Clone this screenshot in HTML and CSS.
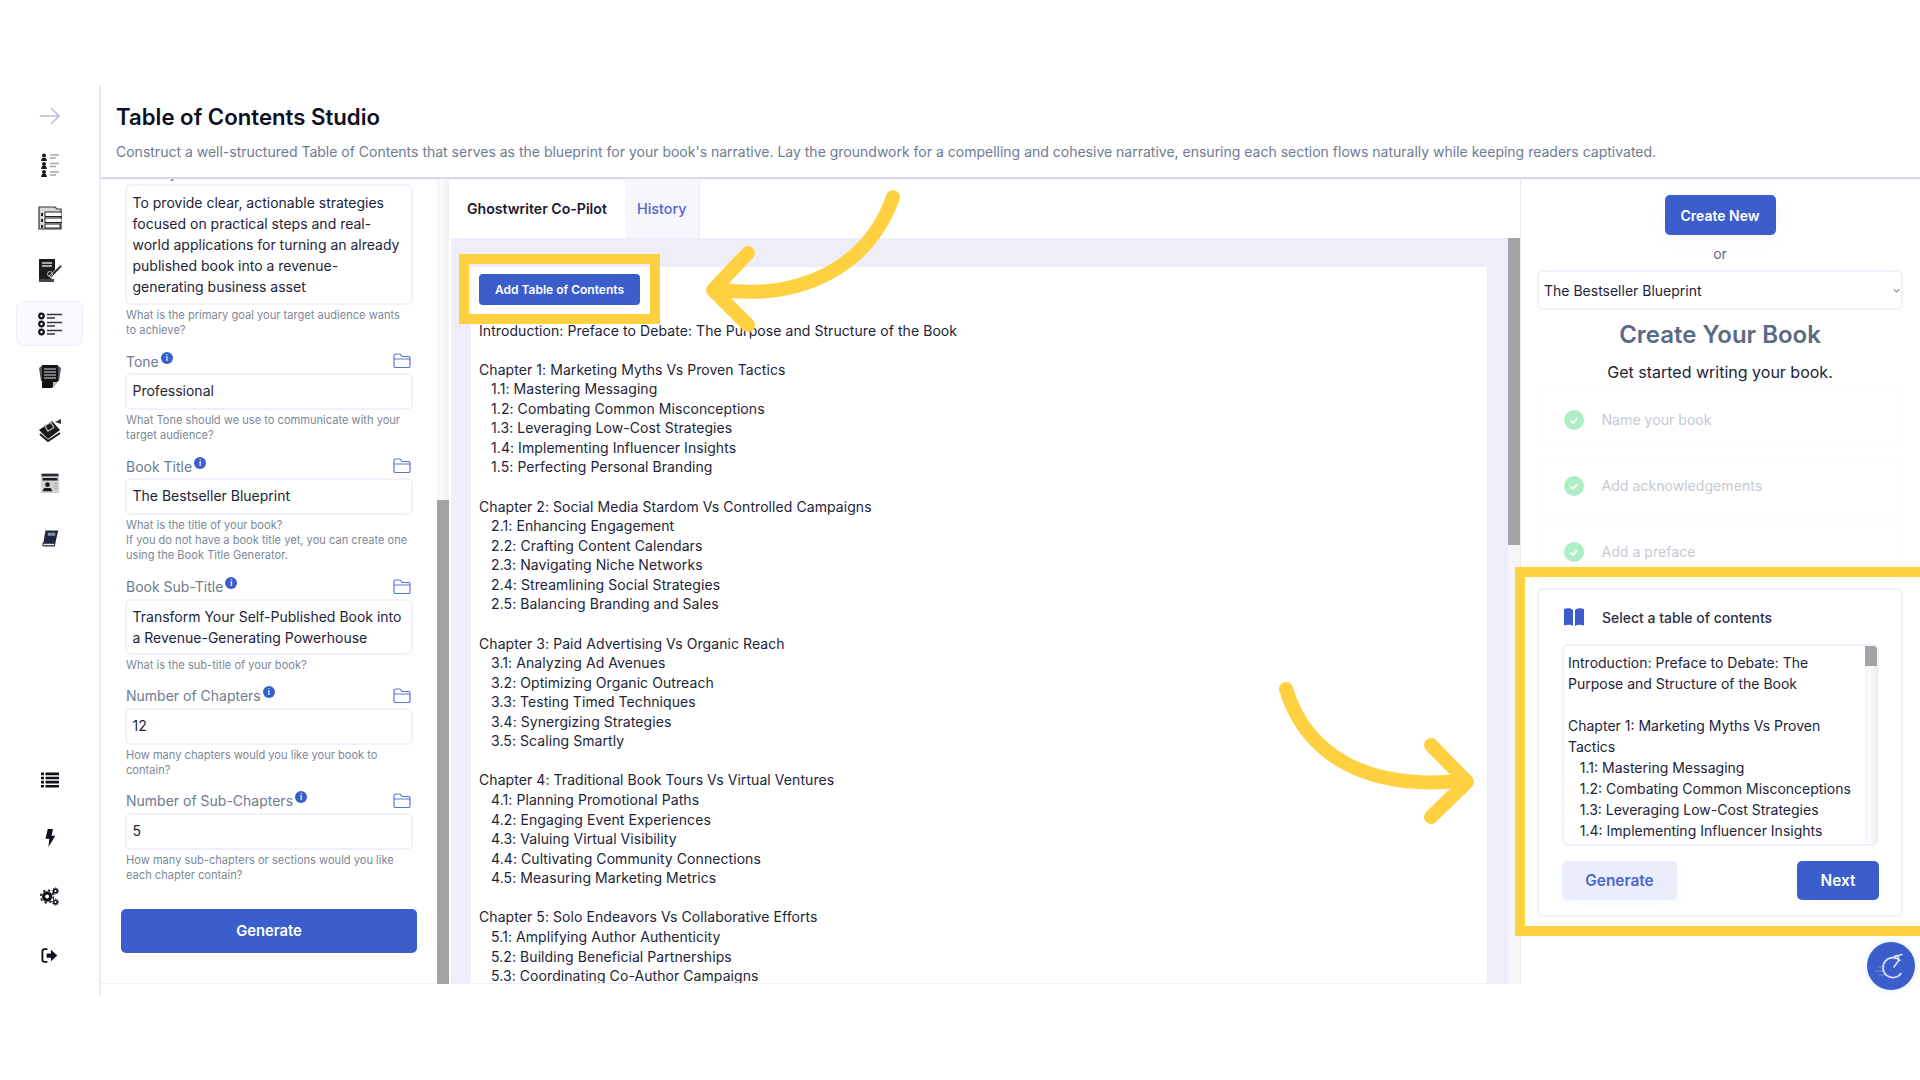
FILE: index.html
```html
<!DOCTYPE html>
<html lang="en">
<head>
<meta charset="utf-8">
<title>Table of Contents Studio</title>
<link rel="stylesheet" href="styles.css">
</head>
<body>
<div class="app">
  <nav class="side">
    <div class="nav-top">
      <div class="nav-item nav-arrow"><svg viewBox="0 0 24 24" width="24" height="24" fill="none" stroke="#b9bcd6" stroke-width="1.5"><path d="M2 12h19M13 4l8 8-8 8"/></svg></div>
      <div class="nav-item"><svg viewBox="0 0 24 26" width="24" height="26"><g fill="#16161e"><circle cx="6" cy="3.500" r="2"/><path d="M3 9l1-3h4l1 3z"/><circle cx="6" cy="12" r="2"/><path d="M3 17l1-3h4l1 3z"/><circle cx="6" cy="20" r="2"/><path d="M3 25l1-3h4l1 3z"/></g><g stroke="#a9a9ad" stroke-width="1.400"><path d="M12 3h9M12 6h6M12 11.500h9M12 14.500h6M12 20h9M12 23h6"/></g></svg></div>
      <div class="nav-item"><svg viewBox="0 0 24 24" width="24" height="24"><path d="M1 1h16l2 2h4v20H1z" fill="#d9d9db" stroke="#333" stroke-width="1.200"/><g fill="#fff" stroke="#222" stroke-width="1"><rect x="7" y="6" width="17" height="4.500"/><rect x="7" y="12" width="17" height="4.500"/><rect x="7" y="18" width="15" height="4"/></g><g fill="#222"><rect x="3" y="7" width="2" height="3"/><rect x="3" y="13" width="2" height="3"/><rect x="3" y="19" width="2" height="3"/></g></svg></div>
      <div class="nav-item"><svg viewBox="0 0 24 24" width="24" height="24"><path d="M1 0h16v13l-4 7H1z" fill="#1d1d22"/><rect x="1" y="20" width="15" height="3" fill="#44444a"/><path d="M4 3h10v2H4zM4 6h10v2H4z" fill="#a9a9ad"/><path d="M11 17L22.500 6 24 7.500 13 19z" fill="#1d1d22" stroke="#fff" stroke-width=".7"/><circle cx="12" cy="15" r="2.500" fill="none" stroke="#bbb"/></svg></div>
      <div class="nav-item nav-active"><svg viewBox="0 0 24 24" width="24" height="24"><g fill="none" stroke="#0e0e14" stroke-width="2.200"><circle cx="3.500" cy="4" r="2.300"/><circle cx="3.500" cy="12" r="2.300"/><circle cx="3.500" cy="20" r="2.300"/></g><g stroke="#33333a" stroke-width="1.500"><path d="M9 2.500h15M9 6h8M9 10.500h15M9 14h8M9 18.500h15M9 22h8"/></g></svg></div>
      <div class="nav-item"><svg viewBox="0 0 24 25" width="24" height="25"><path d="M1 4l4-3h14l4 3-2 13-1 0V4H4v13H3z" fill="#555"/><path d="M4 1h16v16l-6 7H4z" fill="#141418"/><g stroke="#9b9b9f" stroke-width="1.500"><path d="M6 5h12M6 8h12M6 11h12M6 14h12"/></g><path d="M15 24l5-6h-5z" fill="#bbb"/></svg></div>
      <div class="nav-item"><svg viewBox="0 0 24 24" width="24" height="24"><path d="M1 12L14 3l8 9-12 9z" fill="#1a1a1f"/><path d="M2 16l8 7 12-8" fill="none" stroke="#1a1a1f" stroke-width="2"/><rect x="8" y="6" width="7" height="6" fill="none" stroke="#bbb" stroke-width="1.200" transform="rotate(-30 11 9)"/><path d="M17 4l6-3v5z" fill="#333"/></svg></div>
      <div class="nav-item"><svg viewBox="0 0 24 24" width="20" height="24"><rect x="1" y="0" width="22" height="24" rx="1" fill="#d3d3d6"/><rect x="2" y="1" width="20" height="3" fill="#2a2a30"/><rect x="3" y="6" width="18" height="3" fill="#1d1d22"/><circle cx="9" cy="14" r="2.800" fill="#1a1a1f"/><path d="M3 22l2-4h8l2 4z" fill="#1a1a1f"/><g stroke="#9a9a9e" stroke-width="1"><path d="M17 13h4M17 16h4M17 19h4"/></g></svg></div>
      <div class="nav-item nav-book"><svg viewBox="0 0 24 24" width="18" height="18"><path d="M6 2h17l-4 17H3z" fill="#1f2440"/><path d="M3 19h15.500l-.8 3.500H4.500a2 2 0 0 1-1.500-3.500z" fill="#e9e9ee" stroke="#1f2440" stroke-width="1.400"/><rect x="9" y="5" width="10" height="4" fill="#8b90a8"/></svg></div>
    </div>
    <div class="nav-bottom">
      <div class="nav-item"><svg viewBox="0 0 24 24" width="18" height="18"><path fill="#10101a" d="M0 2h4v3.500H0zM6 2h18v3.500H6zM0 7.500h4V11H0zM6 7.500h18V11H6zM0 13h4v3.500H0zM6 13h18v3.500H6zM0 18.500h4V22H0zM6 18.500h18V22H6z"/></svg></div>
      <div class="nav-item"><svg viewBox="0 0 24 24" width="18" height="18"><path fill="#10101a" d="M9 0h7l-2 9h5L10 24l1-11H6z"/></svg></div>
      <div class="nav-item"><svg viewBox="0 0 24 24" width="19" height="19"><g fill="none" stroke="#10101a"><circle cx="9" cy="12" r="4.500" stroke-width="4"/><circle cx="9" cy="12" r="8" stroke-width="2" stroke-dasharray="3 3.300"/><circle cx="19.500" cy="5" r="2.300" stroke-width="2"/><circle cx="19.500" cy="5" r="4" stroke-width="1.200" stroke-dasharray="1.500 1.500"/><circle cx="19.500" cy="19" r="2.300" stroke-width="2"/><circle cx="19.500" cy="19" r="4" stroke-width="1.200" stroke-dasharray="1.500 1.500"/></g></svg></div>
      <div class="nav-item"><svg viewBox="0 0 24 24" width="17" height="17"><path d="M9 3H5a3 3 0 0 0-3 3v12a3 3 0 0 0 3 3h4" fill="none" stroke="#10101a" stroke-width="2.600"/><path fill="#10101a" d="M8 9h6V4l9 8-9 8v-5H8z"/></svg></div>
    </div>
  </nav>
  <div class="work">
    <header class="head">
      <h1 class="title">Table of Contents Studio</h1>
      <p class="sub">Construct a well-structured Table of Contents that serves as the blueprint for your book's narrative. Lay the groundwork for a compelling and cohesive narrative, ensuring each section flows naturally while keeping readers captivated.</p>
    </header>
    <div class="panels">
      <div class="split">
        <section class="form-wrap">
          <div class="form">
            <div class="field">
              <div class="label-row"><span class="label">Primary Goal</span><svg class="folder" viewBox="0 0 18 15"><use href="#folder"/></svg></div>
              <div class="input input-tall">To provide clear, actionable strategies focused on practical steps and real-world applications for turning an already published book into a revenue-generating business asset</div>
              <p class="help">What is the primary goal your target audience wants to achieve?</p>
            </div>
            <div class="field">
              <div class="label-row"><span class="label">Tone<i class="info">i</i></span><svg class="folder" viewBox="0 0 18 15"><use href="#folder"/></svg></div>
              <div class="input">Professional</div>
              <p class="help">What Tone should we use to communicate with your target audience?</p>
            </div>
            <div class="field">
              <div class="label-row"><span class="label">Book Title<i class="info">i</i></span><svg class="folder" viewBox="0 0 18 15"><use href="#folder"/></svg></div>
              <div class="input">The Bestseller Blueprint</div>
              <p class="help">What is the title of your book?<br>If you do not have a book title yet, you can create one using the Book Title Generator.</p>
            </div>
            <div class="field">
              <div class="label-row"><span class="label">Book Sub-Title<i class="info">i</i></span><svg class="folder" viewBox="0 0 18 15"><use href="#folder"/></svg></div>
              <div class="input input-double">Transform Your Self-Published Book into a Revenue-Generating Powerhouse</div>
              <p class="help">What is the sub-title of your book?</p>
            </div>
            <div class="field">
              <div class="label-row"><span class="label">Number of Chapters<i class="info">i</i></span><svg class="folder" viewBox="0 0 18 15"><use href="#folder"/></svg></div>
              <div class="input">12</div>
              <p class="help">How many chapters would you like your book to contain?</p>
            </div>
            <div class="field">
              <div class="label-row"><span class="label">Number of Sub-Chapters<i class="info">i</i></span><svg class="folder" viewBox="0 0 18 15"><use href="#folder"/></svg></div>
              <div class="input">5</div>
              <p class="help">How many sub-chapters or sections would you like each chapter contain?</p>
            </div>
            <button class="btn btn-generate">Generate</button>
          </div>
        </section>
        <div class="scroll scroll-left"><div class="thumb thumb-left"></div></div>
        <section class="main">
          <div class="tabs">
            <div class="tab tab-on">Ghostwriter Co-Pilot</div>
            <div class="tab tab-off">History</div>
          </div>
          <div class="doc-wrap">
            <div class="doc">
              <button class="btn btn-add">Add Table of Contents</button>
<pre class="toc">Introduction: Preface to Debate: The Purpose and Structure of the Book

Chapter 1: Marketing Myths Vs Proven Tactics
   1.1: Mastering Messaging
   1.2: Combating Common Misconceptions
   1.3: Leveraging Low-Cost Strategies
   1.4: Implementing Influencer Insights
   1.5: Perfecting Personal Branding

Chapter 2: Social Media Stardom Vs Controlled Campaigns
   2.1: Enhancing Engagement
   2.2: Crafting Content Calendars
   2.3: Navigating Niche Networks
   2.4: Streamlining Social Strategies
   2.5: Balancing Branding and Sales

Chapter 3: Paid Advertising Vs Organic Reach
   3.1: Analyzing Ad Avenues
   3.2: Optimizing Organic Outreach
   3.3: Testing Timed Techniques
   3.4: Synergizing Strategies
   3.5: Scaling Smartly

Chapter 4: Traditional Book Tours Vs Virtual Ventures
   4.1: Planning Promotional Paths
   4.2: Engaging Event Experiences
   4.3: Valuing Virtual Visibility
   4.4: Cultivating Community Connections
   4.5: Measuring Marketing Metrics

Chapter 5: Solo Endeavors Vs Collaborative Efforts
   5.1: Amplifying Author Authenticity
   5.2: Building Beneficial Partnerships
   5.3: Coordinating Co-Author Campaigns</pre>
            </div>
            <div class="scroll scroll-main"><div class="thumb thumb-main"></div></div>
          </div>
        </section>
      </div>
      <aside class="right">
        <button class="btn btn-new">Create New</button>
        <div class="or">or</div>
        <div class="select"><span>The Bestseller Blueprint</span><svg viewBox="0 0 10 6" width="7" height="5" fill="none" stroke="#8a8f9c" stroke-width="1.500"><path d="M1 1l4 4 4-4"/></svg></div>
        <h2 class="create">Create Your Book</h2>
        <p class="started">Get started writing your book.</p>
        <div class="step"><span class="tick"><svg viewBox="0 0 20 20" width="20" height="20" fill="none" stroke="#fff" stroke-width="1.800"><path d="M6.500 10.500l2.500 2.500 4.500-5"/></svg></span><span>Name your book</span></div>
        <div class="step"><span class="tick"><svg viewBox="0 0 20 20" width="20" height="20" fill="none" stroke="#fff" stroke-width="1.800"><path d="M6.500 10.500l2.500 2.500 4.500-5"/></svg></span><span>Add acknowledgements</span></div>
        <div class="step"><span class="tick"><svg viewBox="0 0 20 20" width="20" height="20" fill="none" stroke="#fff" stroke-width="1.800"><path d="M6.500 10.500l2.500 2.500 4.500-5"/></svg></span><span>Add a preface</span></div>
        <div class="card">
          <div class="card-head"><svg class="book" viewBox="0 0 20 18" width="20" height="18"><path fill="#3b5ecc" d="M0 1c3-1 7-1 9 1v16c-2-1.500-6-1.500-9-.5zM20 1c-3-1-7-1-9 1v16c2-1.500 6-1.500 9-.5z"/></svg><span>Select a table of contents</span></div>
          <div class="mini">
<pre class="mini-text">Introduction: Preface to Debate: The Purpose and Structure of the Book

Chapter 1: Marketing Myths Vs Proven Tactics
   1.1: Mastering Messaging
   1.2: Combating Common Misconceptions
   1.3: Leveraging Low-Cost Strategies
   1.4: Implementing Influencer Insights
   1.5: Perfecting Personal Branding</pre>
            <div class="scroll scroll-mini"><div class="thumb thumb-mini"></div></div>
          </div>
          <div class="card-actions">
            <button class="btn btn-soft">Generate</button>
            <button class="btn btn-next">Next</button>
          </div>
        </div>
      </aside>
    </div>
  </div>
</div>

<svg class="defs" width="0" height="0"><symbol id="folder" viewBox="0 0 18 15"><path d="M1 13V2.500C1 1.700 1.600 1 2.500 1H7l2 2.500h6.500c.9 0 1.500.7 1.500 1.500v8c0 .8-.6 1.500-1.500 1.500h-13C1.600 14.500 1 13.800 1 13zM1 6h16" fill="none" stroke="#5874d8" stroke-width="1.200"/></symbol></svg>

<div class="fab"><svg viewBox="0 0 48 48" width="48" height="48" fill="none" stroke="#dfe3fa" stroke-width="1.600" stroke-linecap="round"><path d="M33 18.500A10 10 0 1 0 34 31.500"/><path d="M27 25l5-7M27 14.500l8-2M31 13.500l.5 2.500"/><path d="M11 25h7M9 29h8M12 33h7" stroke-width="1" opacity=".35"/></svg></div>

<svg class="marks" viewBox="0 0 1920 1080" width="1920" height="1080" fill="none" stroke="#ffd140">
  <rect x="464" y="259" width="191" height="60" stroke-width="10"/>
  <rect x="1520" y="572" width="410" height="359" stroke-width="10"/>
  <g stroke-width="14" stroke-linecap="round" stroke-linejoin="round">
    <path d="M893 197C868 268 800 300 722 290"/>
    <path d="M748 253L713 290L748 325"/>
    <path d="M1286 689C1306 755 1366 790 1460 781"/>
    <path d="M1431 745L1467 782L1431 817"/>
  </g>
</svg>
</body>
</html>
```

FILE: styles.css
```css
* { box-sizing: border-box; }
html, body { margin: 0; padding: 0; background: #fff; }
body {
  width: 1920px;
  height: 1080px;
  overflow: hidden;
  font-family: Inter, "Liberation Sans", sans-serif;
  color: #1d2438;
  font-size: 14px;
  position: relative;
}
.app { margin-top: 85px; height: 910px; display: flex; }

/* Sidebar */
.side {
  width: 101px;
  flex: none;
  border-right: 2px solid #e9e9f8;
  display: flex;
  flex-direction: column;
  justify-content: space-between;
  padding: 8px 0 17px;
}
.nav-top { display: flex; flex-direction: column; gap: 8px; }
.nav-bottom { display: flex; flex-direction: column; gap: 13.6px; }
.nav-item {
  width: 67px;
  height: 45px;
  margin: 0 auto;
  display: flex;
  align-items: center;
  justify-content: center;
  border: 1.5px solid transparent;
  border-radius: 7px;
}
.nav-arrow { margin-bottom: -4px; }
.nav-book { margin-top: 2px; }
.nav-active { background: #f8f8fe; border-color: #eeeefa; }

/* Header */
.work { flex: 1; min-width: 0; display: flex; flex-direction: column; }
.head {
  height: 94px;
  padding: 15px 0 0 15px;
  border-bottom: 2px solid #d9d9ea;
  box-shadow: 0 1px 2px rgba(60, 60, 120, .08);
}
.title { margin: 0; font-size: 22.2px; line-height: 34px; font-weight: 600; color: #0c0f20; }
.sub { margin: 8px 0 0; font-size: 14px; line-height: 20px; color: #6e7b90; white-space: nowrap; }

/* Panels */
.panels { height: 805px; display: flex; }
.split { width: 1419px; display: flex; border-bottom: 1.5px solid #f0f0fa; }
.form-wrap { width: 336px; flex: none; overflow: hidden; padding: 0 24px; }
.form { margin-top: -18px; display: flex; flex-direction: column; gap: 12.2px; }
.label-row { height: 23px; display: flex; justify-content: space-between; align-items: center; padding: 0 2px 0 1px; }
.label { display: inline-flex; font-size: 14px; line-height: 20px; color: #6e7b90; }
.info {
  width: 12px;
  height: 12px;
  margin: 0 0 0 2px;
  border-radius: 50%;
  background: #3b5ecc;
  color: #fff;
  font: 600 8px/12px Inter, sans-serif;
  text-align: center;
}
.folder { width: 18px; height: 15px; margin-top: -2px; }
.input {
  border: 2px solid #f1f1fb;
  border-radius: 6px;
  padding: 5px 7px 7px 5.5px;
  font-size: 14px;
  line-height: 21px;
  color: #1d2438;
}
.input-tall { padding-top: 6px; padding-bottom: 6px; }
.input-double { height: 56px; padding-top: 5px; }
.help { margin: 3px 0 0 1px; font-size: 11.1px; line-height: 15px; color: #7c8899; }
.btn {
  border: 0;
  border-radius: 5px;
  background: #3b5ecc;
  color: #fff;
  font-family: inherit;
  font-weight: 600;
  font-size: 14px;
  padding: 0;
}
.btn-generate { height: 44px; margin: 14px -4px 0; font-size: 14.8px; }

.scroll { flex: none; width: 12px; background: linear-gradient(90deg, #f4f4f4, #fbfbfb 40%, #f0f0f0); }
.thumb { width: 100%; background: #a3a3a3; }
.scroll-left { padding-top: 321px; height: 100%; }
.thumb-left { height: 484px; }
.main { flex: 1; min-width: 0; margin-left: 2px; display: flex; flex-direction: column; border-left: 0; }
.tabs { height: 59px; display: flex; flex: none; }
.tab { display: flex; align-items: center; padding: 0 16px; font-size: 14.1px; }
.tab-on { width: 174px; font-weight: 600; color: #161a2c; }
.tab-off { width: 75px; background: #f6f6fc; border-right: 1px solid #eeeef8; color: #4d65cf; font-weight: 500; font-size: 14.4px; padding: 0 12px; }
.doc-wrap { flex: 1; min-height: 0; display: flex; background: #eeeefb; padding: 29px 0 0 20px; }
.doc { width: 1016px; margin-right: 21px; background: #fff; padding: 7px 8px 0; overflow: hidden; border-radius: 3px 3px 0 0; }
.btn-add { display: block; width: 161px; height: 31px; font-size: 12px; border-radius: 4px; }
.toc { margin: 15.5px 0 0; font: 14px/19.57px Inter, sans-serif; letter-spacing: .07px; color: #1d2438; white-space: pre-wrap; }
.scroll-main { margin-top: -29px; background: #f6f6f6; }
.thumb-main { height: 307px; }

/* Right */
.right { flex: 1; min-width: 0; display: flex; flex-direction: column; align-items: center; padding: 16px 17px 0 16px; border-left: 1px solid #e9e9f8; }
.btn-new { width: 111px; height: 40px; flex: none; box-shadow: 0 4px 16px rgba(59, 94, 204, .06); }
.or { margin-top: 9px; line-height: 20px; height: 26px; color: #5f6b7d; }
.select {
  width: 366px;
  height: 40px;
  flex: none;
  border: 2px solid #f1f1fb;
  border-radius: 6px;
  padding: 0 1px 0 5px;
  display: flex;
  justify-content: space-between;
  align-items: center;
}
.create { margin: 9px 0 0; font-size: 24px; line-height: 32px; font-weight: 600; color: #5b6a84; }
.started { margin: 9px 0 0; font-size: 16px; line-height: 24px; color: #1d2438; }
.step {
  width: 366px;
  height: 57px;
  flex: none;
  margin-top: 9px;
  border: 1.5px solid #fafafd;
  border-radius: 6px;
  display: flex;
  align-items: center;
  padding-left: 25.5px;
  gap: 18px;
  font-size: 14.1px;
  color: #c6cad2;
}
.started + .step { margin-top: 7px; }
.tick { width: 20px; height: 20px; border-radius: 50%; background: #aeeec5; flex: none; display: flex; }
.card {
  width: 366px;
  height: 329px;
  flex: none;
  margin-top: 8px;
  border: 2px solid #f1f1fb;
  border-radius: 6px;
  padding: 0 22px 0 23px;
}
.card-head { height: 54px; display: flex; align-items: center; gap: 18px; padding-left: 2px; font-weight: 500; color: #2a3043; }
.book { flex: none; }
.mini { height: 202px; border: 2px solid #f1f1fb; border-radius: 6px; display: flex; overflow: hidden; }
.mini-text { flex: 1; min-width: 0; margin: 0; padding: 6px 5px 4px 4px; font: 14px/21px Inter, sans-serif; white-space: pre-wrap; color: #1d2438; overflow: hidden; }
.scroll-mini { background: linear-gradient(90deg, #f6f6f6, #fcfcfc 40%, #ececf0); }
.thumb-mini { height: 20px; }
.card-actions { margin-top: 15px; display: flex; justify-content: space-between; }
.btn-soft { width: 115px; height: 39px; font-size: 15.4px; background: #eaeefa; color: #4d65cf; box-shadow: 0 4px 12px rgba(59, 94, 204, .04); }
.btn-next { width: 82px; height: 39px; font-size: 15.4px; }

/* Overlays */
.defs { position: absolute; }
.fab {
  position: absolute;
  left: 1867px;
  top: 942px;
  width: 48px;
  height: 48px;
  border-radius: 50%;
  background: #3b5ecc;
  box-shadow: 0 0 6px rgba(59, 94, 204, .15);
}
.marks { position: absolute; left: 0; top: 0; pointer-events: none; }
```
